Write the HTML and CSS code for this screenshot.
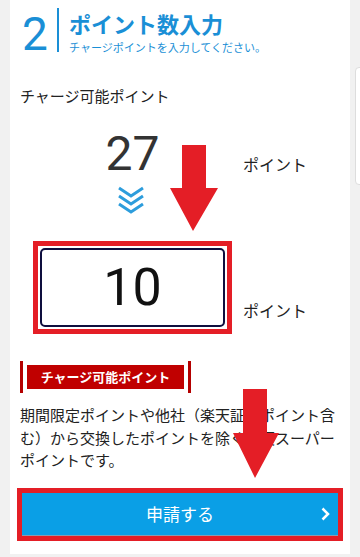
FILE: index.html
```html
<!DOCTYPE html>
<html lang="ja">
<head>
<meta charset="UTF-8">
<meta name="viewport" content="width=device-width, initial-scale=1.0">
<title>ポイント数入力</title>
<link rel="stylesheet" href="styles.css">
</head>
<body>
<div class="page">
    <div class="panel">
        <div class="step">
            <div class="step-num">2</div>
            <div class="step-text">
                <h2 class="step-title">ポイント数入力</h2>
                <p class="step-sub">チャージポイントを入力してください。</p>
            </div>
        </div>

        <p class="avail-label">チャージ可能ポイント</p>

        <div class="amount">
            <div class="amount-value">27</div>
            <div class="unit unit-top">ポイント</div>
            <div class="chevrons">
                <svg width="26" height="28" viewBox="0 0 26 28">
                    <polyline points="1,2 13,10 25,2" />
                    <polyline points="1,10 13,18 25,10" />
                    <polyline points="1,18 13,26 25,18" />
                </svg>
            </div>
            <div></div>
            <div class="input-frame">
                <div class="input-box">10</div>
            </div>
            <div class="unit unit-bottom">ポイント</div>
        </div>

        <div class="note-tag"><span>チャージ可能ポイント</span></div>
        <p class="note">期間限定ポイントや他社（楽天証券ポイント含む）から交換したポイントを除く楽天スーパーポイントです。</p>

        <div class="btn-frame">
            <button class="btn">申請する<span class="btn-chev">
                <svg width="9" height="14" viewBox="0 0 9 14"><polyline points="1.5,1.5 7,7 1.5,12.5" /></svg>
            </span></button>
        </div>

        <!-- red guide arrows drawn over the content -->
        <svg class="arrow arrow-one" width="48" height="86" viewBox="0 0 48 86">
            <polygon points="12,0 36,0 36,43 48,43 23,86 0,43 12,43" />
        </svg>
        <svg class="arrow arrow-two" width="46" height="89" viewBox="0 0 46 89">
            <polygon points="10,0 34,0 34,44 46,44 22,89 0,44 10,44" />
        </svg>
    </div>
    <div class="scrollbar"></div>
</div>
</body>
</html>
```

FILE: styles.css
```css
body {
    margin: 0;
    background-color: #f1f1f1;
    font-family: Roboto, "Noto Sans CJK JP", sans-serif;
    color: #222;
}

.page {
    position: relative;
    width: 360px;
    height: 557px;
    overflow: hidden;
}

.panel {
    position: relative;
    margin-left: 10px;
    width: 340px;
    height: 554px;
    background-color: #fff;
}

/* step header */
.step {
    display: flex;
    padding: 8px 0 0 12px;
}

.step-num {
    font-size: 46px;
    line-height: 44px;
    margin-top: 4px;
    width: 35px;
    color: #1a8fd6;
}

.step-text {
    border-left: 2px solid #1a8fd6;
    padding-left: 10px;
    height: 44px;
}

.step-title {
    margin: 2px 0 0;
    font-size: 22px;
    line-height: 26px;
    font-weight: bold;
    color: #1a8fd6;
    font-family: "Noto Sans CJK JP", sans-serif;
}

.step-sub {
    margin: 4px 0 0;
    font-size: 11px;
    line-height: 14px;
    color: #1a8fd6;
    font-family: "Noto Sans CJK JP", sans-serif;
}

.avail-label {
    margin: 30px 0 0 10px;
    font-size: 15px;
    line-height: 20px;
    font-family: "Noto Sans CJK JP", sans-serif;
}

/* amount grid */
.amount {
    display: grid;
    grid-template-columns: 199px auto;
    column-gap: 11px;
    margin: 24px 0 0 23px;
}

.amount-value {
    text-align: center;
    font-size: 48px;
    line-height: 48px;
    color: #333;
}

.unit {
    align-self: end;
    font-size: 16px;
    line-height: 20px;
    font-family: "Noto Sans CJK JP", sans-serif;
}

.unit-top {
    margin-bottom: 4px;
}

.unit-bottom {
    margin-bottom: 14px;
}

.chevrons {
    display: flex;
    justify-content: center;
    margin: 8px 0 27px;
    height: 28px;
    padding-right: 3px;
}

.chevrons polyline {
    fill: none;
    stroke: #2d9ddc;
    stroke-width: 3;
}

.input-frame {
    border: 5px solid #e41e26;
    padding: 2px;
    height: 79px;
}

.input-box {
    height: 75px;
    border: 2px solid #0e0e3e;
    border-radius: 5px;
    display: flex;
    justify-content: center;
    align-items: center;
    font-size: 52px;
    color: #111;
}

/* note */
.note-tag {
    display: flex;
    margin: 27px 0 0 10px;
    width: 171px;
    height: 32px;
    border-left: 3px solid #b40000;
    border-right: 3px solid #b40000;
    padding: 4px;
    box-sizing: border-box;
}

.note-tag span {
    flex: 1;
    background-color: #c00000;
    color: #fff;
    font-size: 13px;
    font-weight: bold;
    line-height: 24px;
    text-align: center;
    font-family: "Noto Sans CJK JP", sans-serif;
}

.note {
    margin: 11px 0 0 10px;
    width: 322px;
    font-size: 15px;
    line-height: 22.5px;
    font-family: "Noto Sans CJK JP", sans-serif;
}

/* button */
.btn-frame {
    margin: 16px 0 0 7px;
    width: 326px;
    border: 5px solid #e41e26;
    box-sizing: border-box;
}

.btn {
    position: relative;
    display: block;
    width: 100%;
    height: 43px;
    border: none;
    border-bottom: 1px solid #8a9bb0;
    background-color: #0a9fe6;
    color: #fff;
    font-size: 17px;
    font-family: "Noto Sans CJK JP", sans-serif;
    padding: 0;
}

.btn-chev {
    position: absolute;
    right: 8px;
    top: 14px;
    line-height: 0;
}

.btn-chev polyline {
    fill: none;
    stroke: #fff;
    stroke-width: 2.5;
}

/* overlay arrows */
.arrow {
    position: absolute;
}

.arrow polygon {
    fill: #e41e26;
}

.arrow-one {
    left: 160px;
    top: 145px;
}

.arrow-two {
    left: 223px;
    top: 389px;
}

.scrollbar {
    position: absolute;
    left: 355px;
    top: 67px;
    width: 8px;
    height: 116px;
    background-color: #fff;
    border: 1px solid #ddd;
    border-radius: 4px;
}
```
